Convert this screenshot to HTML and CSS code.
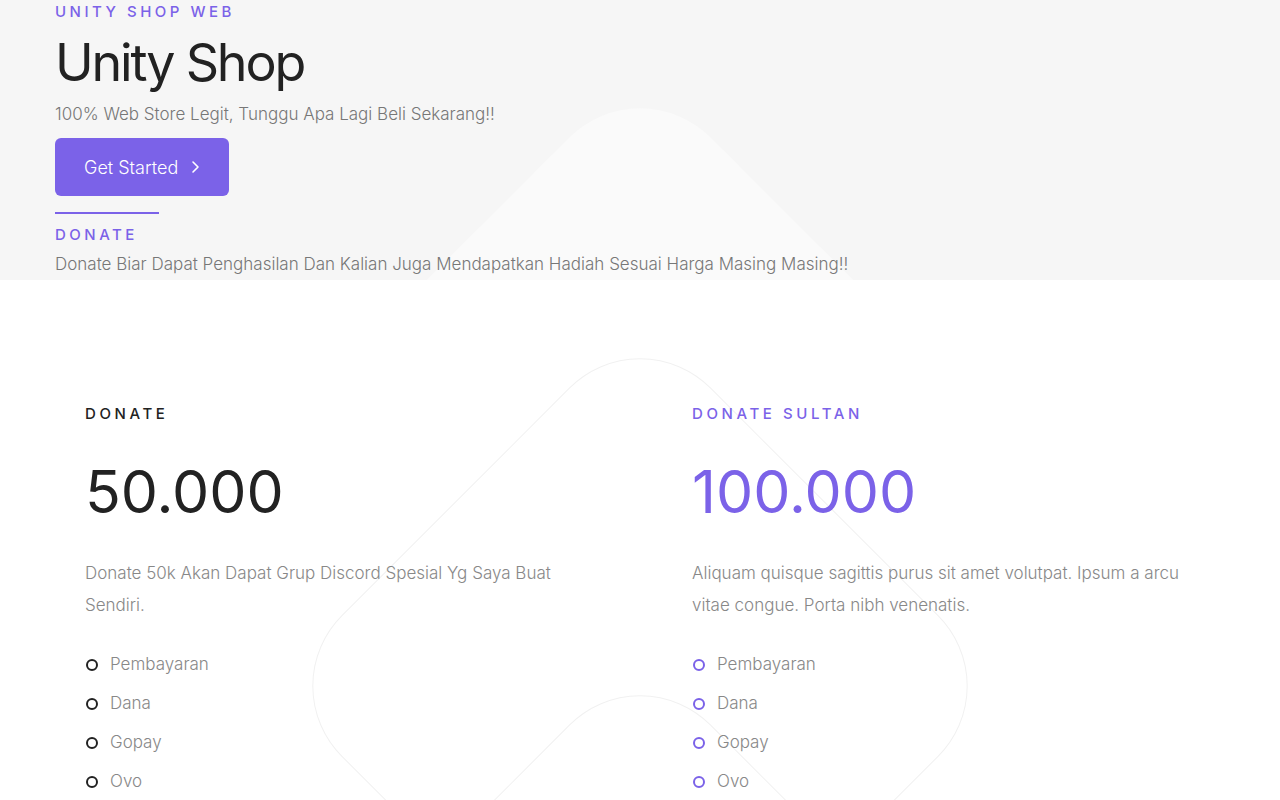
FILE: index.html
```html
<!DOCTYPE html>
<html lang="id">
<head>
    <meta charset="UTF-8">
    <meta name="viewport" content="width=device-width, initial-scale=1.0">
    <title>Unity Shop</title>
    <link rel="stylesheet" href="styles.css">
</head>
<body>
    <section class="hero">
        <div class="bg-shape bg-shape-fill"></div>
        <div class="hero-inner">
            <span class="eyebrow">Unity Shop Web</span>
            <h1>Unity Shop</h1>
            <p class="lead">100% Web Store Legit, Tunggu Apa Lagi Beli Sekarang!!</p>
            <a href="#donate" class="btn">
                Get Started
                <svg width="10" height="16" viewBox="0 0 10 16" fill="none" stroke="currentColor" stroke-width="1.6" stroke-linecap="round" stroke-linejoin="round"><path d="M3 3l5 5-5 5"/></svg>
            </a>
            <div class="divider"></div>
            <span class="eyebrow">Donate</span>
            <p class="lead lead-donate">Donate Biar Dapat Penghasilan Dan Kalian Juga Mendapatkan Hadiah Sesuai Harga Masing Masing!!</p>
        </div>
    </section>

    <section class="pricing" id="donate">
        <div class="bg-shape bg-shape-line one"></div>
        <div class="bg-shape bg-shape-line two"></div>
        <div class="pricing-grid">
            <div class="plan">
                <span class="plan-name">Donate</span>
                <div class="plan-price">50.000</div>
                <p class="plan-desc">Donate 50k Akan Dapat Grup Discord Spesial Yg Saya Buat Sendiri.</p>
                <ul class="plan-list">
                    <li>Pembayaran</li>
                    <li>Dana</li>
                    <li>Gopay</li>
                    <li>Ovo</li>
                </ul>
            </div>
            <div class="plan plan-featured">
                <span class="plan-name">Donate Sultan</span>
                <div class="plan-price">100.000</div>
                <p class="plan-desc">Aliquam quisque sagittis purus sit amet volutpat. Ipsum a arcu vitae congue. Porta nibh venenatis.</p>
                <ul class="plan-list">
                    <li>Pembayaran</li>
                    <li>Dana</li>
                    <li>Gopay</li>
                    <li>Ovo</li>
                </ul>
            </div>
        </div>
    </section>
</body>
</html>
```

FILE: styles.css
```css
body {
    margin: 0;
    font-family: 'Inter', 'Noto Sans', sans-serif;
    color: #222;
    background: #fff;
}
.hero {
    position: relative;
    overflow: hidden;
    background: #f6f6f6;
    height: 280px;
    box-sizing: border-box;
}
.hero-inner {
    position: relative;
    padding: 0 55px;
    display: flex;
    flex-direction: column;
    align-items: flex-start;
}
.eyebrow {
    display: block;
    font-size: 15px;
    line-height: 24px;
    font-weight: 500;
    letter-spacing: 3.5px;
    text-transform: uppercase;
    color: #7b62e8;
}
h1 {
    margin: 4px 0 0;
    font-size: 52px;
    line-height: 70px;
    font-weight: 400;
    letter-spacing: -2.2px;
    color: #222;
}
.lead {
    margin: 2px 0 0;
    font-size: 17px;
    line-height: 28px;
    font-weight: 300;
    color: #777;
}
.lead-donate {
    margin-top: 3px;
}
.btn {
    margin-top: 10px;
    display: inline-flex;
    align-items: center;
    gap: 12px;
    height: 58px;
    padding: 0 29px;
    border-radius: 6px;
    background: #7b62e8;
    color: #fff;
    font-size: 18px;
    font-weight: 300;
    text-decoration: none;
    box-sizing: border-box;
}
.divider {
    width: 104px;
    height: 2px;
    background: #7b62e8;
    margin: 16px 0 9px;
}
.bg-shape {
    position: absolute;
    left: 379px;
    width: 522px;
    height: 522px;
    border-radius: 100px;
    transform: rotate(45deg);
    box-sizing: border-box;
}
.bg-shape-fill {
    top: 175px;
    background: #fafafa;
}
.bg-shape-line {
    border: 1px solid #f1f1f1;
}
.bg-shape-line.one { top: 145px; }
.bg-shape-line.two { top: 482px; }
.pricing {
    position: relative;
    overflow: hidden;
    padding: 122px 0 120px;
}
.pricing-grid {
    position: relative;
    display: grid;
    grid-template-columns: 520px 520px;
    column-gap: 87px;
    padding-left: 85px;
}
.plan-name {
    display: block;
    font-size: 15px;
    line-height: 24px;
    font-weight: 500;
    letter-spacing: 3.6px;
    text-transform: uppercase;
    color: #222;
}
.plan-price {
    margin-top: 26px;
    font-size: 59px;
    line-height: 80px;
    font-weight: 400;
    color: #222;
}
.plan-desc {
    margin: 25px 0 0;
    font-size: 17px;
    line-height: 32px;
    font-weight: 300;
    color: #888;
}
.plan-list {
    list-style: none;
    margin: 24px 0 0;
    padding: 0;
}
.plan-list li {
    position: relative;
    padding-left: 25px;
    font-size: 17px;
    line-height: 39px;
    font-weight: 300;
    color: #888;
}
.plan-list li::before {
    content: '';
    position: absolute;
    left: 1px;
    top: 14px;
    width: 12px;
    height: 12px;
    border: 2px solid #222;
    border-radius: 50%;
    box-sizing: border-box;
}
.plan-featured .plan-name,
.plan-featured .plan-price {
    color: #7b62e8;
}
.plan-featured .plan-list li::before {
    border-color: #7b62e8;
}
```
